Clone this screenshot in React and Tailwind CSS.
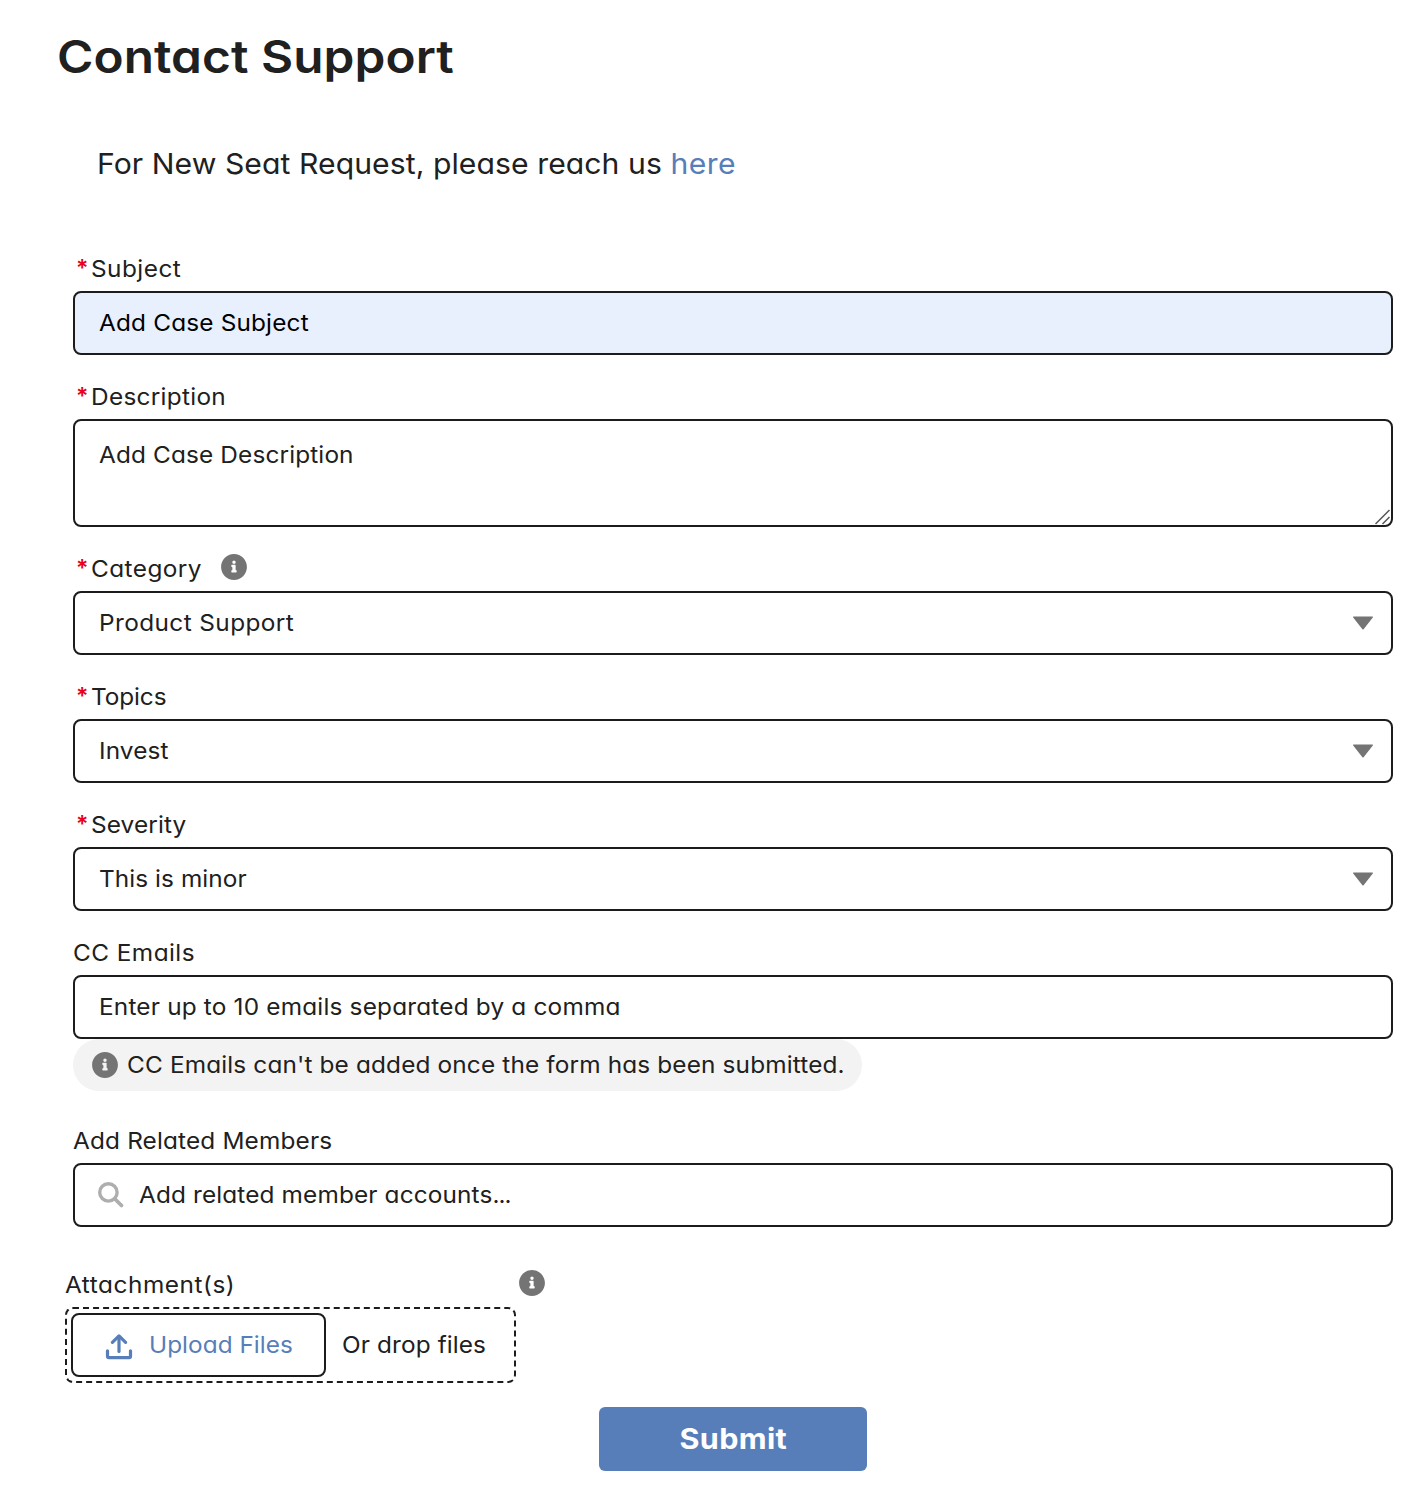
import React from 'react';

function InfoIcon({ className = '' }) {
  return (
    <svg viewBox="0 0 520 520" className={`block size-7 shrink-0 ${className}`} fill="#747474">
      <path d="M260 20C128 20 20 128 20 260s108 240 240 240 240-108 240-240S392 20 260 20zm0 121c17 0 31 14 31 31s-14 31-31 31-31-14-31-31 14-31 31-31zm50 209c0 5-4 10-10 10h-80c-5 0-10-4-10-10v-20c0-5 4-11 10-11 5 0 10-4 10-10v-40c0-5-4-10-10-10s-10-6-10-11v-20c0-5 4-10 10-10h60c5 0 10 5 10 10v81c0 5 4 10 10 10s10 6 10 11v20z" />
    </svg>
  );
}

function Caret() {
  return (
    <svg viewBox="0 0 20 14" className="ml-auto mr-[18px] h-[14px] w-5" fill="#747474">
      <path d="M0.6 0.4h18.8c.6 0 .8.6.4 1L10.6 13.2a.8.8 0 0 1-1.2 0L.2 1.4c-.4-.4-.2-1 .4-1z" />
    </svg>
  );
}

/* Text widened slightly to give the rounder, broader letterforms of the brand face. */
function Wide({ children, className = '' }) {
  return <span className={`inline-block origin-left scale-x-[1.06] ${className}`}>{children}</span>;
}

function Label({ children, required, tracking, info }) {
  return (
    <div className="flex h-11 items-center">
      {required && <span className="relative -top-px ml-[3px] w-[15px] font-semibold text-[#ea001e]">*</span>}
      <label><Wide className={tracking}>{children}</Wide></label>
      {info && <InfoIcon className="relative -top-0.5 ml-[24px]" />}
    </div>
  );
}

function Box({ children, className = 'bg-white' }) {
  return (
    <div className={`flex h-16 items-center rounded-lg border-2 border-[#1c1c1c] pl-6 ${className}`}>
      {children}
    </div>
  );
}

export default function App() {
  return (
    <main className="h-[1488px] w-[1424px] overflow-hidden whitespace-nowrap bg-white pt-[27px] font-['Inter',sans-serif] text-[23px] leading-9 text-[#202020] [font-feature-settings:'cv11']">
      <h1 className="ml-[57px] w-fit origin-left scale-x-[1.1] text-[45px] font-semibold leading-[60px] tracking-[0.05px]">Contact Support</h1>
      <p className="ml-[97px] mt-[57px] w-fit origin-left scale-x-[1.04] text-[29px] leading-10 tracking-[0.06px]">
        For New Seat Request, please reach us <a className="tracking-[0.4px] text-[#577eb9]">here</a>
      </p>

      <form className="ml-[73px] mt-[63px] w-[1320px]">
        <div className="flex flex-col gap-5">
          <div>
            <Label required tracking="tracking-[0.43px]">Subject</Label>
            <Box className="bg-[#e8effd] text-black"><Wide className="tracking-[0.15px]">Add Case Subject</Wide></Box>
          </div>
          <div>
            <Label required tracking="tracking-[0.27px]">Description</Label>
            <div className="relative h-[108px] rounded-lg border-2 border-[#1c1c1c] pl-6 pt-4">
              <Wide className="tracking-[0.12px]">Add Case Description</Wide>
              <svg viewBox="0 0 16 16" className="absolute bottom-0 right-0 size-4" stroke="#555" strokeWidth="1.5" fill="none">
                <path d="M0.5 15 14.5 1M7.5 15l7-7" />
              </svg>
            </div>
          </div>
          <div>
            <Label required info tracking="tracking-[0.41px]">Category</Label>
            <Box><Wide className="tracking-[0.38px]">Product Support</Wide><Caret /></Box>
          </div>
          <div>
            <Label required tracking="tracking-[-0.1px]">Topics</Label>
            <Box><Wide className="tracking-[0.1px]">Invest</Wide><Caret /></Box>
          </div>
          <div>
            <Label required tracking="tracking-[0.1px]">Severity</Label>
            <Box><Wide className="tracking-[0.06px]">This is minor</Wide><Caret /></Box>
          </div>
          <div>
            <Label tracking="tracking-[0.41px]">CC Emails</Label>
            <Box><Wide className="tracking-[0.17px]">Enter up to 10 emails separated by a comma</Wide></Box>
            <div className="flex h-[52px] w-[789px] items-center rounded-full bg-[#f3f3f3] pl-[18px]">
              <InfoIcon />
              <Wide className="ml-[7.5px] tracking-[0.13px]">CC Emails can't be added once the form has been submitted.</Wide>
            </div>
          </div>
        </div>

        <div className="mt-7">
          <Label tracking="tracking-[0.14px]">Add Related Members</Label>
          <Box>
            <svg viewBox="0 0 28 28" className="-ml-0.5 mr-[13.5px] size-7" fill="none" stroke="#aeaeae">
              <circle cx="11.4" cy="11.4" r="8.7" strokeWidth="3.4" />
              <path d="m18 18 6.5 6.5" strokeWidth="3.8" strokeLinecap="round" />
            </svg>
            <Wide className="tracking-[0.12px]">
              Add related member accounts<span className="tracking-[-0.9px]">...</span>
            </Wide>
          </Box>
        </div>

        <div className="-ml-2 mt-9">
          <div className="flex h-11 w-[481px] items-center justify-between">
            <label><Wide className="tracking-[0.5px]">Attachment(s)</Wide></label>
            <InfoIcon className="relative -top-0.5" />
          </div>
          <div className="flex h-[76px] w-[451px] items-center rounded-lg border-2 border-dashed border-[#1c1c1c] pl-1">
            <div className="flex h-16 w-[255px] items-center rounded-lg border-2 border-[#1c1c1c] pl-8 text-[#577eb9]">
              <svg viewBox="0 0 28 28" className="relative top-0.5 mr-4 size-7" fill="none" stroke="currentColor" strokeLinecap="round" strokeLinejoin="round">
                <path d="M14 18.5V4" strokeWidth="3.2" />
                <path d="M7.4 9.4 14 2.9l6.6 6.5" strokeWidth="3.2" />
                <path d="M2.5 17.8v5.4c0 .9.5 1.4 1.4 1.4h20.2c.9 0 1.4-.5 1.4-1.4v-5.4" strokeWidth="3.2" />
              </svg>
              <Wide className="tracking-[0.02px]">Upload Files</Wide>
            </div>
            <Wide className="ml-[16px] tracking-[0.1px]">Or drop files</Wide>
          </div>
        </div>

        <div className="mt-6 flex justify-center">
          <button type="button" className="h-16 w-[268px] rounded-md bg-[#577eb9] pb-px text-[28px] font-bold tracking-[0.3px] text-white">
            <span className="inline-block scale-x-[1.09]">Submit</span>
          </button>
        </div>
      </form>
    </main>
  );
}
